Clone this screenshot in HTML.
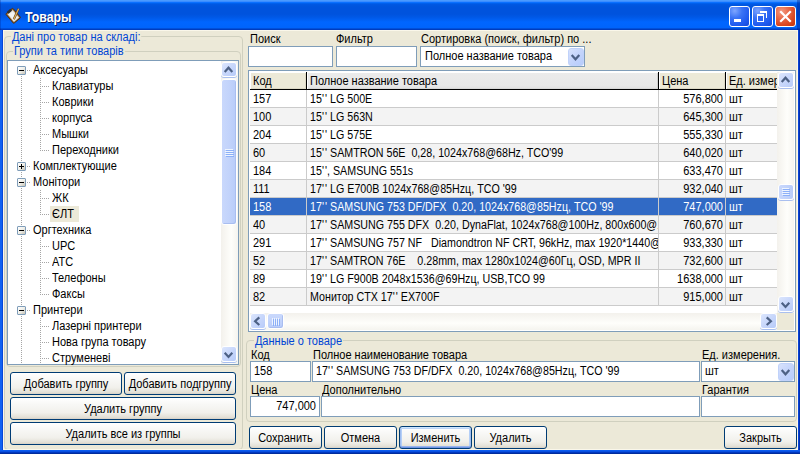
<!DOCTYPE html>
<html><head><meta charset="utf-8"><style>
*{box-sizing:border-box}
html,body{margin:0;padding:0;width:800px;height:454px;overflow:hidden;background:#0831D9;position:relative}
.a{position:absolute}
.t{position:absolute;font:12px/13px "Liberation Sans",sans-serif;white-space:nowrap;color:#000;transform:scaleX(.917);transform-origin:0 0}
.c{transform-origin:50% 0}
.r{transform-origin:100% 0}
.gb{position:absolute;border:1px solid #D0D0BF;border-radius:3px}
.gt{position:absolute;font:11px/13px "Liberation Sans",sans-serif;color:#0046D5;background:#ECE9D8;padding:0 1px;white-space:nowrap}
.ed{position:absolute;border:1px solid #7F9DB9;background:#fff}
.btn{position:absolute;border:1px solid #003C74;border-radius:3px;background:linear-gradient(to bottom,#FFFFFF 0%,#F8F8F6 30%,#F1F0EB 70%,#E3E0D6 92%,#D6D0C5 100%)}
.sbb{position:absolute;border-radius:2px;border:1px solid #fff;background:linear-gradient(135deg,#DAE4FC 0%,#C6D5FB 45%,#B4C8F8 100%);box-shadow:0 0 0 0 #fff}
.gl{position:absolute;background:#CBCBCB}
</style></head><body>
<div class="a" style="left:0px;top:0px;width:800px;height:30px;background:linear-gradient(to bottom,#4A9AFF 0px,#4A9AFF 1px,#3A8CFF 1px,#3A8CFF 2px,#0A70FF 2px,#0A70FF 3px,#0060EC 3px,#0060EC 4px,#0058E4 4px,#0055DE 6px,#0053DD 8px,#0053DD 14px,#0058E6 17px,#0060F4 20px,#0066FF 22px,#0064FB 28px,#0050DA 28px,#0050DA 29px,#003CBE 29px,#003CBE 30px)"></div>
<div class="a" style="left:0px;top:0px;width:1px;height:30px;background:rgba(0,20,120,0.25)"></div>
<div class="a" style="left:797px;top:0px;width:3px;height:30px;background:rgba(0,20,120,0.35)"></div>
<div class="a" style="left:0px;top:30px;width:3px;height:424px;background:linear-gradient(to right,#1262F2 0px,#1262F2 2px,#0848D8 2px,#0848D8 3px)"></div>
<div class="a" style="left:798px;top:30px;width:2px;height:424px;background:linear-gradient(to right,#0842D4 0px,#0842D4 1px,#0030B4 1px)"></div>
<div class="a" style="left:0px;top:450px;width:800px;height:4px;background:linear-gradient(to bottom,#0A5CF0 0px,#0A5CF0 1px,#0850E0 1px,#0850E0 2px,#0038C0 2px,#0038C0 3px,#002C9C 3px)"></div>
<div class="a" style="left:3px;top:30px;width:795px;height:420px;background:#ECE9D8;border:1px solid #FAF7EA"></div>
<svg class="a" style="left:0;top:0" width="30" height="30" viewBox="0 0 30 30">
<g transform="rotate(-40 13.2 15.8)">
<rect x="8.6" y="9.6" width="9.2" height="12.4" rx="0.8" fill="#9A6A30" stroke="#4A2C10" stroke-width="0.9"/>
<rect x="9.8" y="11" width="6.8" height="10" fill="#E4E4E0"/>
<rect x="10.5" y="12" width="5" height="8" fill="#F4F4F2"/>
<rect x="11" y="8.6" width="4.4" height="2.6" fill="#303030"/>
</g>
<line x1="18.6" y1="8.8" x2="13.8" y2="19.2" stroke="#5A3A10" stroke-width="2.2"/>
<line x1="18.6" y1="8.8" x2="13.8" y2="19.2" stroke="#E0B060" stroke-width="1.2"/>
</svg>
<div class="a" style="left:25px;top:9px;font:bold 14px/16px 'Liberation Sans',sans-serif;color:#fff;white-space:nowrap;transform:scaleX(0.88);transform-origin:0 0;text-shadow:1px 1px 0 #0A1E6A">Товары</div>
<div class="a" style="left:729px;top:6px;width:21px;height:21px;border:1px solid #fff;border-radius:3px;background:radial-gradient(circle at 25% 20%,#7EA6FF 0%,#3A73F5 35%,#1F5AEF 70%,#1448D8 100%)"></div>
<div class="a" style="left:752px;top:6px;width:21px;height:21px;border:1px solid #fff;border-radius:3px;background:radial-gradient(circle at 25% 20%,#7EA6FF 0%,#3A73F5 35%,#1F5AEF 70%,#1448D8 100%)"></div>
<div class="a" style="left:775px;top:6px;width:21px;height:21px;border:1px solid #fff;border-radius:3px;background:radial-gradient(circle at 30% 25%,#F39B82 0%,#E86A4A 35%,#D9461F 70%,#C0350F 100%)"></div>
<div class="a" style="left:734px;top:19px;width:7px;height:3px;background:#fff"></div>
<div class="a" style="left:760px;top:11px;width:7px;height:7px;border:1px solid #fff;border-top-width:2px;border-left:0;border-bottom:0"></div>
<div class="a" style="left:757px;top:14px;width:7px;height:8px;border:1px solid #fff;border-top-width:2px;background:#2D66F2"></div>
<svg class="a" style="left:775px;top:6px" width="21" height="21"><path d="M6 6 L15 15 M15 6 L6 15" stroke="#fff" stroke-width="2.2" stroke-linecap="square"/></svg>
<div class="a" style="left:4px;top:36px;width:239px;height:414px;border:1px solid #D0D0BF;border-radius:4px;background:transparent"></div>
<div class="a" style="left:3px;top:449px;width:795px;height:1px;background:#FAF7EA"></div>
<div class="t" style="left:12px;top:31px;color:#0046D5;background:#ECE9D8;padding:0 1px;margin-left:-1px">Дані про товар на складі:</div>
<div class="a" style="left:6px;top:51px;width:235px;height:316px;border:1px solid #D0D0BF;border-radius:4px;background:transparent"></div>
<div class="t" style="left:14px;top:45px;color:#0046D5;background:#ECE9D8;padding:0 1px;margin-left:-1px">Групи та типи товарів</div>
<div class="a" style="left:7px;top:60px;width:232px;height:305px;border:1px solid #7F9DB9;background:#fff"></div>
<div class="a" style="left:21px;top:76px;width:1px;height:288px;background:repeating-linear-gradient(to bottom,#A5A5A5 0 1px,transparent 1px 2px)"></div>
<div class="a" style="left:40px;top:78px;width:1px;height:73px;background:repeating-linear-gradient(to bottom,#A5A5A5 0 1px,transparent 1px 2px)"></div>
<div class="a" style="left:40px;top:190px;width:1px;height:25px;background:repeating-linear-gradient(to bottom,#A5A5A5 0 1px,transparent 1px 2px)"></div>
<div class="a" style="left:40px;top:238px;width:1px;height:57px;background:repeating-linear-gradient(to bottom,#A5A5A5 0 1px,transparent 1px 2px)"></div>
<div class="a" style="left:40px;top:318px;width:1px;height:41px;background:repeating-linear-gradient(to bottom,#A5A5A5 0 1px,transparent 1px 2px)"></div>
<div class="a" style="left:40px;top:318px;width:1px;height:46px;background:repeating-linear-gradient(to bottom,#A5A5A5 0 1px,transparent 1px 2px)"></div>
<div class="a" style="left:17px;top:66px;width:9px;height:9px;border:1px solid #7F9DB9;border-radius:1px;background:linear-gradient(135deg,#fff 0%,#F0F0EA 50%,#C6C2B4 100%)"></div>
<div class="a" style="left:19px;top:70px;width:5px;height:1px;background:#000"></div>
<div class="a" style="left:27px;top:70px;width:4px;height:1px;background:repeating-linear-gradient(to right,#A5A5A5 0 1px,transparent 1px 2px)"></div>
<div class="t" style="left:33px;top:64px;color:#000;">Аксесуары</div>
<div class="a" style="left:42px;top:86px;width:7px;height:1px;background:repeating-linear-gradient(to right,#A5A5A5 0 1px,transparent 1px 2px)"></div>
<div class="t" style="left:52px;top:80px;color:#000;">Клавиатуры</div>
<div class="a" style="left:42px;top:102px;width:7px;height:1px;background:repeating-linear-gradient(to right,#A5A5A5 0 1px,transparent 1px 2px)"></div>
<div class="t" style="left:52px;top:96px;color:#000;">Коврики</div>
<div class="a" style="left:42px;top:118px;width:7px;height:1px;background:repeating-linear-gradient(to right,#A5A5A5 0 1px,transparent 1px 2px)"></div>
<div class="t" style="left:52px;top:112px;color:#000;">корпуса</div>
<div class="a" style="left:42px;top:134px;width:7px;height:1px;background:repeating-linear-gradient(to right,#A5A5A5 0 1px,transparent 1px 2px)"></div>
<div class="t" style="left:52px;top:128px;color:#000;">Мышки</div>
<div class="a" style="left:42px;top:150px;width:7px;height:1px;background:repeating-linear-gradient(to right,#A5A5A5 0 1px,transparent 1px 2px)"></div>
<div class="t" style="left:52px;top:144px;color:#000;">Переходники</div>
<div class="a" style="left:17px;top:162px;width:9px;height:9px;border:1px solid #7F9DB9;border-radius:1px;background:linear-gradient(135deg,#fff 0%,#F0F0EA 50%,#C6C2B4 100%)"></div>
<div class="a" style="left:19px;top:166px;width:5px;height:1px;background:#000"></div>
<div class="a" style="left:21px;top:164px;width:1px;height:5px;background:#000"></div>
<div class="a" style="left:27px;top:166px;width:4px;height:1px;background:repeating-linear-gradient(to right,#A5A5A5 0 1px,transparent 1px 2px)"></div>
<div class="t" style="left:33px;top:160px;color:#000;">Комплектующие</div>
<div class="a" style="left:17px;top:178px;width:9px;height:9px;border:1px solid #7F9DB9;border-radius:1px;background:linear-gradient(135deg,#fff 0%,#F0F0EA 50%,#C6C2B4 100%)"></div>
<div class="a" style="left:19px;top:182px;width:5px;height:1px;background:#000"></div>
<div class="a" style="left:27px;top:182px;width:4px;height:1px;background:repeating-linear-gradient(to right,#A5A5A5 0 1px,transparent 1px 2px)"></div>
<div class="t" style="left:33px;top:176px;color:#000;">Монітори</div>
<div class="a" style="left:42px;top:198px;width:7px;height:1px;background:repeating-linear-gradient(to right,#A5A5A5 0 1px,transparent 1px 2px)"></div>
<div class="t" style="left:52px;top:192px;color:#000;">ЖК</div>
<div class="a" style="left:42px;top:214px;width:7px;height:1px;background:repeating-linear-gradient(to right,#A5A5A5 0 1px,transparent 1px 2px)"></div>
<div class="a" style="left:50px;top:206px;width:29px;height:16px;background:#ECE9D8"></div>
<div class="t" style="left:52px;top:208px;color:#000;">ЄЛТ</div>
<div class="a" style="left:17px;top:226px;width:9px;height:9px;border:1px solid #7F9DB9;border-radius:1px;background:linear-gradient(135deg,#fff 0%,#F0F0EA 50%,#C6C2B4 100%)"></div>
<div class="a" style="left:19px;top:230px;width:5px;height:1px;background:#000"></div>
<div class="a" style="left:27px;top:230px;width:4px;height:1px;background:repeating-linear-gradient(to right,#A5A5A5 0 1px,transparent 1px 2px)"></div>
<div class="t" style="left:33px;top:224px;color:#000;">Оргтехника</div>
<div class="a" style="left:42px;top:246px;width:7px;height:1px;background:repeating-linear-gradient(to right,#A5A5A5 0 1px,transparent 1px 2px)"></div>
<div class="t" style="left:52px;top:240px;color:#000;">UPC</div>
<div class="a" style="left:42px;top:262px;width:7px;height:1px;background:repeating-linear-gradient(to right,#A5A5A5 0 1px,transparent 1px 2px)"></div>
<div class="t" style="left:52px;top:256px;color:#000;">АТС</div>
<div class="a" style="left:42px;top:278px;width:7px;height:1px;background:repeating-linear-gradient(to right,#A5A5A5 0 1px,transparent 1px 2px)"></div>
<div class="t" style="left:52px;top:272px;color:#000;">Телефоны</div>
<div class="a" style="left:42px;top:294px;width:7px;height:1px;background:repeating-linear-gradient(to right,#A5A5A5 0 1px,transparent 1px 2px)"></div>
<div class="t" style="left:52px;top:288px;color:#000;">Факсы</div>
<div class="a" style="left:17px;top:306px;width:9px;height:9px;border:1px solid #7F9DB9;border-radius:1px;background:linear-gradient(135deg,#fff 0%,#F0F0EA 50%,#C6C2B4 100%)"></div>
<div class="a" style="left:19px;top:310px;width:5px;height:1px;background:#000"></div>
<div class="a" style="left:27px;top:310px;width:4px;height:1px;background:repeating-linear-gradient(to right,#A5A5A5 0 1px,transparent 1px 2px)"></div>
<div class="t" style="left:33px;top:304px;color:#000;">Принтери</div>
<div class="a" style="left:42px;top:326px;width:7px;height:1px;background:repeating-linear-gradient(to right,#A5A5A5 0 1px,transparent 1px 2px)"></div>
<div class="t" style="left:52px;top:320px;color:#000;">Лазерні принтери</div>
<div class="a" style="left:42px;top:342px;width:7px;height:1px;background:repeating-linear-gradient(to right,#A5A5A5 0 1px,transparent 1px 2px)"></div>
<div class="t" style="left:52px;top:336px;color:#000;">Нова група товару</div>
<div class="a" style="left:42px;top:358px;width:7px;height:1px;background:repeating-linear-gradient(to right,#A5A5A5 0 1px,transparent 1px 2px)"></div>
<div class="t" style="left:52px;top:352px;color:#000;">Струменеві</div>
<div class="a" style="left:221px;top:61px;width:17px;height:303px;background:linear-gradient(to right,#F3F1EC 0%,#FEFEFB 60%,#F5F4EF 100%)"></div>
<div class="a" style="left:221px;top:62px;width:16px;height:15px;border:1px solid #FFFFFF;border-radius:3px;background:linear-gradient(135deg,#DCE6FD 0%,#C8D7FB 50%,#B7CBF9 100%);box-shadow:0 1px 0 #A9BFEF"></div>
<svg class="a" style="left:0;top:0" width="800" height="454"><path d="M224.7 71.89999999999999 L228.5 67.7 L232.3 71.89999999999999" stroke="#4D6185" stroke-width="2.2" fill="none" stroke-linejoin="miter"/></svg>
<div class="a" style="left:221px;top:346px;width:16px;height:16px;border:1px solid #FFFFFF;border-radius:3px;background:linear-gradient(135deg,#DCE6FD 0%,#C8D7FB 50%,#B7CBF9 100%);box-shadow:0 1px 0 #A9BFEF"></div>
<svg class="a" style="left:0;top:0" width="800" height="454"><path d="M224.7 352.7 L228.5 356.90000000000003 L232.3 352.7" stroke="#4D6185" stroke-width="2.2" fill="none" stroke-linejoin="miter"/></svg>
<div class="a" style="left:221px;top:79px;width:16px;height:146px;border:1px solid #FFFFFF;border-radius:3px;background:linear-gradient(to right,#C9D8FC 0%,#C2D3FB 50%,#B8CCF9 100%);box-shadow:inset -1px -1px 0 #A9BEF0"></div>
<div class="a" style="left:225px;top:149px;width:8px;height:1px;background:#EEF4FE"></div>
<div class="a" style="left:226px;top:150px;width:8px;height:1px;background:#8CB0F8"></div>
<div class="a" style="left:225px;top:151px;width:8px;height:1px;background:#EEF4FE"></div>
<div class="a" style="left:226px;top:152px;width:8px;height:1px;background:#8CB0F8"></div>
<div class="a" style="left:225px;top:153px;width:8px;height:1px;background:#EEF4FE"></div>
<div class="a" style="left:226px;top:154px;width:8px;height:1px;background:#8CB0F8"></div>
<div class="a" style="left:225px;top:155px;width:8px;height:1px;background:#EEF4FE"></div>
<div class="a" style="left:226px;top:156px;width:8px;height:1px;background:#8CB0F8"></div>
<div class="btn" style="left:10px;top:372px;width:112px;height:23px;"></div>
<div class="t c" style="left:10px;width:112px;text-align:center;top:378px">Добавить группу</div>
<div class="btn" style="left:124px;top:372px;width:112px;height:23px;"></div>
<div class="t c" style="left:124px;width:112px;text-align:center;top:378px">Добавить подгруппу</div>
<div class="btn" style="left:10px;top:397px;width:226px;height:23px;"></div>
<div class="t c" style="left:10px;width:226px;text-align:center;top:403px">Удалить группу</div>
<div class="btn" style="left:10px;top:422px;width:226px;height:23px;"></div>
<div class="t c" style="left:10px;width:226px;text-align:center;top:428px">Удалить все из группы</div>
<div class="t" style="left:250px;top:33px;color:#000;">Поиск</div>
<div class="t" style="left:336px;top:33px;color:#000;">Фильтр</div>
<div class="t" style="left:421px;top:33px;color:#000;">Сортировка (поиск, фильтр) по ...</div>
<div class="a" style="left:248px;top:46px;width:85px;height:21px;border:1px solid #7F9DB9;background:#fff"></div>
<div class="a" style="left:336px;top:46px;width:81px;height:21px;border:1px solid #7F9DB9;background:#fff"></div>
<div class="a" style="left:420px;top:46px;width:165px;height:21px;border:1px solid #7F9DB9;background:#fff"></div>
<div class="t" style="left:425px;top:50px;color:#000;">Полное название товара</div>
<div class="a" style="left:568px;top:48px;width:16px;height:18px;border:1px solid #C0D2FA;border-radius:3px;background:linear-gradient(135deg,#D8E2FC 0%,#C4D4FB 50%,#B6CCFC 100%)"></div>
<svg class="a" style="left:0;top:0" width="800" height="454"><path d="M571.7 55.1 L575.5 59.300000000000004 L579.3 55.1" stroke="#4D6185" stroke-width="2.2" fill="none" stroke-linejoin="miter"/></svg>
<div class="a" style="left:248px;top:70px;width:548px;height:262px;border:1px solid #7F9DB9;background:#fff"></div>
<div class="a" style="left:250px;top:72px;width:527px;height:17px;background:#ECE9D8"></div>
<div class="a" style="left:307px;top:72px;width:351px;height:17px;background:linear-gradient(to bottom,#EBEBEB 0%,#E8E8E8 80%,#E0E0E0 100%)"></div>
<div class="a" style="left:250px;top:88px;width:527px;height:1px;background:#DDD9C6"></div>
<div class="a" style="left:307px;top:88px;width:351px;height:1px;background:#D8D8D8"></div>
<div class="a" style="left:305px;top:72px;width:1px;height:17px;background:#DDD9C6"></div>
<div class="a" style="left:657px;top:72px;width:1px;height:17px;background:#CFCFCF"></div>
<div class="a" style="left:724px;top:72px;width:1px;height:17px;background:#DDD9C6"></div>
<div class="a" style="left:250px;top:72px;width:527px;height:1px;background:#FFFFFF"></div>
<div class="a" style="left:250px;top:72px;width:1px;height:17px;background:#FFFFFF"></div>
<div class="a" style="left:307px;top:72px;width:1px;height:17px;background:#FFFFFF"></div>
<div class="a" style="left:659px;top:72px;width:1px;height:17px;background:#FFFFFF"></div>
<div class="a" style="left:726px;top:72px;width:1px;height:17px;background:#FFFFFF"></div>
<div class="a" style="left:250px;top:89px;width:527px;height:1px;background:#000"></div>
<div class="a" style="left:306px;top:72px;width:1px;height:18px;background:#000"></div>
<div class="a" style="left:658px;top:72px;width:1px;height:18px;background:#000"></div>
<div class="a" style="left:725px;top:72px;width:1px;height:18px;background:#000"></div>
<div class="t" style="left:253px;top:75px;color:#000;">Код</div>
<div class="t" style="left:310px;top:75px;color:#000;">Полное название товара</div>
<div class="t" style="left:662px;top:75px;color:#000;">Цена</div>
<div class="a" style="left:726px;top:72px;width:51px;height:17px;overflow:hidden">
<div class="t" style="left:3px;top:3px">Ед. измерения</div></div>
<div class="a" style="left:250px;top:90px;width:527px;height:17px;background:#FFFFFF"></div>
<div class="a" style="left:250px;top:107px;width:527px;height:1px;background:#CBCBCB"></div>
<div class="a" style="left:306px;top:90px;width:1px;height:17px;background:#CBCBCB"></div>
<div class="a" style="left:658px;top:90px;width:1px;height:17px;background:#CBCBCB"></div>
<div class="a" style="left:725px;top:90px;width:1px;height:17px;background:#CBCBCB"></div>
<div class="t" style="left:253px;top:93px;color:#000;">157</div>
<div class="a" style="left:307px;top:90px;width:351px;height:17px;overflow:hidden"><div class="t" style="left:3px;top:3px;color:#000;transform:scaleX(0.891)">15'<span style="margin-left:1.2px">'</span> LG 500E</div></div>
<div class="t r" style="left:659px;width:64px;text-align:right;top:93px;color:#000">576,800</div>
<div class="t" style="left:729px;top:93px;color:#000;">шт</div>
<div class="a" style="left:250px;top:108px;width:527px;height:17px;background:#F3F3F3"></div>
<div class="a" style="left:250px;top:125px;width:527px;height:1px;background:#CBCBCB"></div>
<div class="a" style="left:306px;top:108px;width:1px;height:17px;background:#CBCBCB"></div>
<div class="a" style="left:658px;top:108px;width:1px;height:17px;background:#CBCBCB"></div>
<div class="a" style="left:725px;top:108px;width:1px;height:17px;background:#CBCBCB"></div>
<div class="t" style="left:253px;top:111px;color:#000;">100</div>
<div class="a" style="left:307px;top:108px;width:351px;height:17px;overflow:hidden"><div class="t" style="left:3px;top:3px;color:#000;transform:scaleX(0.891)">15'<span style="margin-left:1.2px">'</span> LG 563N</div></div>
<div class="t r" style="left:659px;width:64px;text-align:right;top:111px;color:#000">645,300</div>
<div class="t" style="left:729px;top:111px;color:#000;">шт</div>
<div class="a" style="left:250px;top:126px;width:527px;height:17px;background:#FFFFFF"></div>
<div class="a" style="left:250px;top:143px;width:527px;height:1px;background:#CBCBCB"></div>
<div class="a" style="left:306px;top:126px;width:1px;height:17px;background:#CBCBCB"></div>
<div class="a" style="left:658px;top:126px;width:1px;height:17px;background:#CBCBCB"></div>
<div class="a" style="left:725px;top:126px;width:1px;height:17px;background:#CBCBCB"></div>
<div class="t" style="left:253px;top:129px;color:#000;">204</div>
<div class="a" style="left:307px;top:126px;width:351px;height:17px;overflow:hidden"><div class="t" style="left:3px;top:3px;color:#000;transform:scaleX(0.891)">15'<span style="margin-left:1.2px">'</span> LG 575E</div></div>
<div class="t r" style="left:659px;width:64px;text-align:right;top:129px;color:#000">555,330</div>
<div class="t" style="left:729px;top:129px;color:#000;">шт</div>
<div class="a" style="left:250px;top:144px;width:527px;height:17px;background:#F3F3F3"></div>
<div class="a" style="left:250px;top:161px;width:527px;height:1px;background:#CBCBCB"></div>
<div class="a" style="left:306px;top:144px;width:1px;height:17px;background:#CBCBCB"></div>
<div class="a" style="left:658px;top:144px;width:1px;height:17px;background:#CBCBCB"></div>
<div class="a" style="left:725px;top:144px;width:1px;height:17px;background:#CBCBCB"></div>
<div class="t" style="left:253px;top:147px;color:#000;">60</div>
<div class="a" style="left:307px;top:144px;width:351px;height:17px;overflow:hidden"><div class="t" style="left:3px;top:3px;color:#000;transform:scaleX(0.891)">15'<span style="margin-left:1.2px">'</span> SAMTRON 56E&nbsp; 0,28, 1024x768@68Hz, TCO'99</div></div>
<div class="t r" style="left:659px;width:64px;text-align:right;top:147px;color:#000">640,020</div>
<div class="t" style="left:729px;top:147px;color:#000;">шт</div>
<div class="a" style="left:250px;top:162px;width:527px;height:17px;background:#FFFFFF"></div>
<div class="a" style="left:250px;top:179px;width:527px;height:1px;background:#CBCBCB"></div>
<div class="a" style="left:306px;top:162px;width:1px;height:17px;background:#CBCBCB"></div>
<div class="a" style="left:658px;top:162px;width:1px;height:17px;background:#CBCBCB"></div>
<div class="a" style="left:725px;top:162px;width:1px;height:17px;background:#CBCBCB"></div>
<div class="t" style="left:253px;top:165px;color:#000;">184</div>
<div class="a" style="left:307px;top:162px;width:351px;height:17px;overflow:hidden"><div class="t" style="left:3px;top:3px;color:#000;transform:scaleX(0.891)">15'<span style="margin-left:1.2px">'</span>, SAMSUNG 551s</div></div>
<div class="t r" style="left:659px;width:64px;text-align:right;top:165px;color:#000">633,470</div>
<div class="t" style="left:729px;top:165px;color:#000;">шт</div>
<div class="a" style="left:250px;top:180px;width:527px;height:17px;background:#F3F3F3"></div>
<div class="a" style="left:250px;top:197px;width:527px;height:1px;background:#CBCBCB"></div>
<div class="a" style="left:306px;top:180px;width:1px;height:17px;background:#CBCBCB"></div>
<div class="a" style="left:658px;top:180px;width:1px;height:17px;background:#CBCBCB"></div>
<div class="a" style="left:725px;top:180px;width:1px;height:17px;background:#CBCBCB"></div>
<div class="t" style="left:253px;top:183px;color:#000;">111</div>
<div class="a" style="left:307px;top:180px;width:351px;height:17px;overflow:hidden"><div class="t" style="left:3px;top:3px;color:#000;transform:scaleX(0.891)">17'<span style="margin-left:1.2px">'</span> LG E700B 1024x768@85Hzц, TCO '99</div></div>
<div class="t r" style="left:659px;width:64px;text-align:right;top:183px;color:#000">932,040</div>
<div class="t" style="left:729px;top:183px;color:#000;">шт</div>
<div class="a" style="left:250px;top:198px;width:527px;height:17px;background:#316AC5"></div>
<div class="a" style="left:250px;top:215px;width:527px;height:1px;background:#CBCBCB"></div>
<div class="a" style="left:306px;top:198px;width:1px;height:17px;background:#CBCBCB"></div>
<div class="a" style="left:658px;top:198px;width:1px;height:17px;background:#CBCBCB"></div>
<div class="a" style="left:725px;top:198px;width:1px;height:17px;background:#CBCBCB"></div>
<div class="t" style="left:253px;top:201px;color:#fff;">158</div>
<div class="a" style="left:307px;top:198px;width:351px;height:17px;overflow:hidden"><div class="t" style="left:3px;top:3px;color:#fff;transform:scaleX(0.891)">17'<span style="margin-left:1.2px">'</span> SAMSUNG 753 DF/DFX&nbsp; 0.20, 1024x768@85Hzц, TCO '99</div></div>
<div class="t r" style="left:659px;width:64px;text-align:right;top:201px;color:#fff">747,000</div>
<div class="t" style="left:729px;top:201px;color:#fff;">шт</div>
<div class="a" style="left:250px;top:216px;width:527px;height:17px;background:#F3F3F3"></div>
<div class="a" style="left:250px;top:233px;width:527px;height:1px;background:#CBCBCB"></div>
<div class="a" style="left:306px;top:216px;width:1px;height:17px;background:#CBCBCB"></div>
<div class="a" style="left:658px;top:216px;width:1px;height:17px;background:#CBCBCB"></div>
<div class="a" style="left:725px;top:216px;width:1px;height:17px;background:#CBCBCB"></div>
<div class="t" style="left:253px;top:219px;color:#000;">40</div>
<div class="a" style="left:307px;top:216px;width:351px;height:17px;overflow:hidden"><div class="t" style="left:3px;top:3px;color:#000;transform:scaleX(0.891)">17'<span style="margin-left:1.2px">'</span> SAMSUNG 755 DFX&nbsp; 0.20, DynaFlat, 1024x768@100Hz, 800x600@100Hz</div></div>
<div class="t r" style="left:659px;width:64px;text-align:right;top:219px;color:#000">760,670</div>
<div class="t" style="left:729px;top:219px;color:#000;">шт</div>
<div class="a" style="left:250px;top:234px;width:527px;height:17px;background:#FFFFFF"></div>
<div class="a" style="left:250px;top:251px;width:527px;height:1px;background:#CBCBCB"></div>
<div class="a" style="left:306px;top:234px;width:1px;height:17px;background:#CBCBCB"></div>
<div class="a" style="left:658px;top:234px;width:1px;height:17px;background:#CBCBCB"></div>
<div class="a" style="left:725px;top:234px;width:1px;height:17px;background:#CBCBCB"></div>
<div class="t" style="left:253px;top:237px;color:#000;">291</div>
<div class="a" style="left:307px;top:234px;width:351px;height:17px;overflow:hidden"><div class="t" style="left:3px;top:3px;color:#000;transform:scaleX(0.891)">17'<span style="margin-left:1.2px">'</span> SAMSUNG 757 NF&nbsp;&nbsp; Diamondtron NF CRT, 96kHz, max 1920*1440@</div></div>
<div class="t r" style="left:659px;width:64px;text-align:right;top:237px;color:#000">933,330</div>
<div class="t" style="left:729px;top:237px;color:#000;">шт</div>
<div class="a" style="left:250px;top:252px;width:527px;height:17px;background:#F3F3F3"></div>
<div class="a" style="left:250px;top:269px;width:527px;height:1px;background:#CBCBCB"></div>
<div class="a" style="left:306px;top:252px;width:1px;height:17px;background:#CBCBCB"></div>
<div class="a" style="left:658px;top:252px;width:1px;height:17px;background:#CBCBCB"></div>
<div class="a" style="left:725px;top:252px;width:1px;height:17px;background:#CBCBCB"></div>
<div class="t" style="left:253px;top:255px;color:#000;">52</div>
<div class="a" style="left:307px;top:252px;width:351px;height:17px;overflow:hidden"><div class="t" style="left:3px;top:3px;color:#000;transform:scaleX(0.891)">17'<span style="margin-left:1.2px">'</span> SAMTRON 76E&nbsp;&nbsp;&nbsp; 0.28mm, max 1280x1024@60Гц, OSD, MPR II</div></div>
<div class="t r" style="left:659px;width:64px;text-align:right;top:255px;color:#000">732,600</div>
<div class="t" style="left:729px;top:255px;color:#000;">шт</div>
<div class="a" style="left:250px;top:270px;width:527px;height:17px;background:#FFFFFF"></div>
<div class="a" style="left:250px;top:287px;width:527px;height:1px;background:#CBCBCB"></div>
<div class="a" style="left:306px;top:270px;width:1px;height:17px;background:#CBCBCB"></div>
<div class="a" style="left:658px;top:270px;width:1px;height:17px;background:#CBCBCB"></div>
<div class="a" style="left:725px;top:270px;width:1px;height:17px;background:#CBCBCB"></div>
<div class="t" style="left:253px;top:273px;color:#000;">89</div>
<div class="a" style="left:307px;top:270px;width:351px;height:17px;overflow:hidden"><div class="t" style="left:3px;top:3px;color:#000;transform:scaleX(0.891)">19'<span style="margin-left:1.2px">'</span> LG F900B 2048x1536@69Hzц, USB,TCO 99</div></div>
<div class="t r" style="left:659px;width:64px;text-align:right;top:273px;color:#000">1638,000</div>
<div class="t" style="left:729px;top:273px;color:#000;">шт</div>
<div class="a" style="left:250px;top:288px;width:527px;height:17px;background:#F3F3F3"></div>
<div class="a" style="left:250px;top:305px;width:527px;height:1px;background:#CBCBCB"></div>
<div class="a" style="left:306px;top:288px;width:1px;height:17px;background:#CBCBCB"></div>
<div class="a" style="left:658px;top:288px;width:1px;height:17px;background:#CBCBCB"></div>
<div class="a" style="left:725px;top:288px;width:1px;height:17px;background:#CBCBCB"></div>
<div class="t" style="left:253px;top:291px;color:#000;">82</div>
<div class="a" style="left:307px;top:288px;width:351px;height:17px;overflow:hidden"><div class="t" style="left:3px;top:3px;color:#000;transform:scaleX(0.891)">Монитор CTX 17'<span style="margin-left:1.2px">'</span> EX700F</div></div>
<div class="t r" style="left:659px;width:64px;text-align:right;top:291px;color:#000">915,000</div>
<div class="t" style="left:729px;top:291px;color:#000;">шт</div>
<div class="a" style="left:777px;top:72px;width:17px;height:241px;background:linear-gradient(to right,#F3F1EC 0%,#FEFEFB 60%,#F5F4EF 100%)"></div>
<div class="a" style="left:778px;top:72px;width:16px;height:16px;border:1px solid #FFFFFF;border-radius:3px;background:linear-gradient(135deg,#DCE6FD 0%,#C8D7FB 50%,#B7CBF9 100%);box-shadow:0 1px 0 #A9BFEF"></div>
<svg class="a" style="left:0;top:0" width="800" height="454"><path d="M781.7 81.89999999999999 L785.5 77.7 L789.3 81.89999999999999" stroke="#4D6185" stroke-width="2.2" fill="none" stroke-linejoin="miter"/></svg>
<div class="a" style="left:778px;top:296px;width:16px;height:16px;border:1px solid #FFFFFF;border-radius:3px;background:linear-gradient(135deg,#DCE6FD 0%,#C8D7FB 50%,#B7CBF9 100%);box-shadow:0 1px 0 #A9BFEF"></div>
<svg class="a" style="left:0;top:0" width="800" height="454"><path d="M781.7 302.7 L785.5 306.90000000000003 L789.3 302.7" stroke="#4D6185" stroke-width="2.2" fill="none" stroke-linejoin="miter"/></svg>
<div class="a" style="left:778px;top:184px;width:16px;height:16px;border:1px solid #FFFFFF;border-radius:3px;background:linear-gradient(to right,#C9D8FC 0%,#C2D3FB 50%,#B8CCF9 100%);box-shadow:0 1px 0 #A9BFEF"></div>
<div class="a" style="left:782px;top:188px;width:7px;height:1px;background:#EEF4FE"></div>
<div class="a" style="left:783px;top:189px;width:7px;height:1px;background:#8CB0F8"></div>
<div class="a" style="left:782px;top:190px;width:7px;height:1px;background:#EEF4FE"></div>
<div class="a" style="left:783px;top:191px;width:7px;height:1px;background:#8CB0F8"></div>
<div class="a" style="left:782px;top:192px;width:7px;height:1px;background:#EEF4FE"></div>
<div class="a" style="left:783px;top:193px;width:7px;height:1px;background:#8CB0F8"></div>
<div class="a" style="left:782px;top:194px;width:7px;height:1px;background:#EEF4FE"></div>
<div class="a" style="left:783px;top:195px;width:7px;height:1px;background:#8CB0F8"></div>
<div class="a" style="left:250px;top:313px;width:527px;height:17px;background:linear-gradient(to bottom,#F3F1EC 0%,#FEFEFB 60%,#F5F4EF 100%)"></div>
<div class="a" style="left:250px;top:313px;width:16px;height:16px;border:1px solid #FFFFFF;border-radius:3px;background:linear-gradient(135deg,#DCE6FD 0%,#C8D7FB 50%,#B7CBF9 100%);box-shadow:0 1px 0 #A9BFEF"></div>
<svg class="a" style="left:0;top:0" width="800" height="454"><path d="M259.3 317.4 L255.1 321.2 L259.3 325.0" stroke="#4D6185" stroke-width="2.2" fill="none" stroke-linejoin="miter"/></svg>
<div class="a" style="left:267px;top:313px;width:17px;height:16px;border:1px solid #FFFFFF;border-radius:3px;background:linear-gradient(to bottom,#C9D8FC 0%,#C2D3FB 50%,#B8CCF9 100%);box-shadow:inset -1px -1px 0 #A9BEF0"></div>
<div class="a" style="left:272px;top:318px;width:1px;height:7px;background:#EEF4FE"></div>
<div class="a" style="left:273px;top:319px;width:1px;height:7px;background:#8CB0F8"></div>
<div class="a" style="left:274px;top:318px;width:1px;height:7px;background:#EEF4FE"></div>
<div class="a" style="left:275px;top:319px;width:1px;height:7px;background:#8CB0F8"></div>
<div class="a" style="left:276px;top:318px;width:1px;height:7px;background:#EEF4FE"></div>
<div class="a" style="left:277px;top:319px;width:1px;height:7px;background:#8CB0F8"></div>
<div class="a" style="left:278px;top:318px;width:1px;height:7px;background:#EEF4FE"></div>
<div class="a" style="left:279px;top:319px;width:1px;height:7px;background:#8CB0F8"></div>
<div class="a" style="left:760px;top:313px;width:17px;height:16px;border:1px solid #FFFFFF;border-radius:3px;background:linear-gradient(135deg,#DCE6FD 0%,#C8D7FB 50%,#B7CBF9 100%);box-shadow:0 1px 0 #A9BFEF"></div>
<svg class="a" style="left:0;top:0" width="800" height="454"><path d="M766.6999999999999 317.4 L770.9 321.2 L766.6999999999999 325.0" stroke="#4D6185" stroke-width="2.2" fill="none" stroke-linejoin="miter"/></svg>
<div class="a" style="left:777px;top:313px;width:17px;height:17px;background:#ECE9D8"></div>
<div class="a" style="left:246px;top:340px;width:551px;height:82px;border:1px solid #D0D0BF;border-radius:4px"></div>
<div class="t" style="left:255px;top:335px;color:#0046D5;background:#ECE9D8;padding:0 1px;margin-left:-1px">Данные о товаре</div>
<div class="t" style="left:251px;top:349px;color:#000;">Код</div>
<div class="t" style="left:313px;top:349px;color:#000;">Полное наименование товара</div>
<div class="t" style="left:702px;top:349px;color:#000;">Ед. измерения.</div>
<div class="a" style="left:250px;top:361px;width:61px;height:21px;border:1px solid #7F9DB9;background:#fff"></div>
<div class="t" style="left:254px;top:365px;color:#000;">158</div>
<div class="a" style="left:312px;top:361px;width:388px;height:21px;border:1px solid #7F9DB9;background:#fff"></div>
<div class="t" style="left:316px;top:365px;transform:scaleX(0.891)">17'<span style="margin-left:1.2px">'</span> SAMSUNG 753 DF/DFX&nbsp; 0.20, 1024x768@85Hzц, TCO '99</div>
<div class="a" style="left:701px;top:361px;width:94px;height:21px;border:1px solid #7F9DB9;background:#fff"></div>
<div class="t" style="left:705px;top:365px;color:#000;">шт</div>
<div class="a" style="left:778px;top:363px;width:16px;height:18px;border:1px solid #C0D2FA;border-radius:3px;background:linear-gradient(135deg,#D8E2FC 0%,#C4D4FB 50%,#B6CCFC 100%)"></div>
<svg class="a" style="left:0;top:0" width="800" height="454"><path d="M781.7 370.09999999999997 L785.5 374.3 L789.3 370.09999999999997" stroke="#4D6185" stroke-width="2.2" fill="none" stroke-linejoin="miter"/></svg>
<div class="t" style="left:251px;top:384px;color:#000;">Цена</div>
<div class="t" style="left:322px;top:384px;color:#000;">Дополнительно</div>
<div class="t" style="left:702px;top:384px;color:#000;">Гарантия</div>
<div class="a" style="left:250px;top:396px;width:70px;height:21px;border:1px solid #7F9DB9;background:#fff"></div>
<div class="t r" style="left:250px;width:66px;text-align:right;top:400px">747,000</div>
<div class="a" style="left:321px;top:396px;width:379px;height:21px;border:1px solid #7F9DB9;background:#fff"></div>
<div class="a" style="left:701px;top:396px;width:94px;height:21px;border:1px solid #7F9DB9;background:#fff"></div>
<div class="btn" style="left:249px;top:426px;width:73px;height:23px;"></div>
<div class="t c" style="left:249px;width:73px;text-align:center;top:432px">Сохранить</div>
<div class="btn" style="left:324px;top:426px;width:73px;height:23px;"></div>
<div class="t c" style="left:324px;width:73px;text-align:center;top:432px">Отмена</div>
<div class="btn" style="left:399px;top:426px;width:73px;height:23px;box-shadow:inset 0 1px 0 #CEE7FF,inset 0 -1px 0 #6F94E4,inset 1px 0 0 #9FBDEF,inset -1px 0 0 #9FBDEF,inset 0 2px 0 #BCD4F6,inset 0 -2px 0 #97B4EC,inset 2px 0 0 #B4CFF7,inset -2px 0 0 #B4CFF7;"></div>
<div class="t c" style="left:399px;width:73px;text-align:center;top:432px">Изменить</div>
<div class="btn" style="left:474px;top:426px;width:73px;height:23px;"></div>
<div class="t c" style="left:474px;width:73px;text-align:center;top:432px">Удалить</div>
<div class="btn" style="left:724px;top:426px;width:73px;height:23px;"></div>
<div class="t c" style="left:724px;width:73px;text-align:center;top:432px">Закрыть</div>
</body></html>
